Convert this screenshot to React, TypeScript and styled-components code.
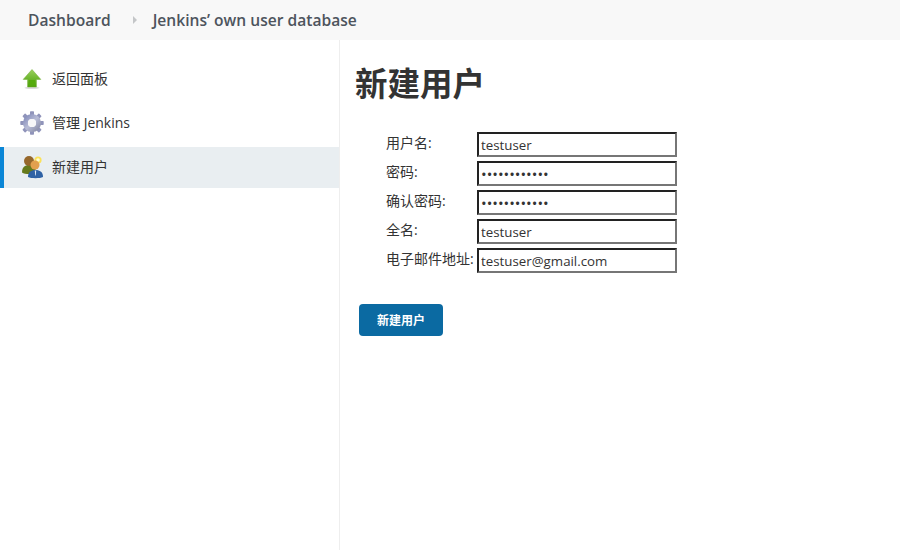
import React from "react";
import styled, { createGlobalStyle } from "styled-components";

const GlobalStyle = createGlobalStyle`
  html, body {
    margin: 0;
    padding: 0;
    background: #fff;
    font-family: "Open Sans", "Noto Sans CJK SC", sans-serif;
    color: #333;
  }
`;

const fields = [
  { label: "用户名:", type: "text", value: "testuser" },
  { label: "密码:", type: "password", value: "testuser1234" },
  { label: "确认密码:", type: "password", value: "testuser1234" },
  { label: "全名:", type: "text", value: "testuser" },
  { label: "电子邮件地址:", type: "text", value: "testuser@gmail.com" },
];

const UpIcon = () => (
  <svg width="24" height="24" viewBox="0 0 24 24">
    <defs>
      <linearGradient id="upFill" x1="0" y1="0" x2="0" y2="1">
        <stop offset="0" stopColor="#9ad05e" />
        <stop offset="0.55" stopColor="#6cb52d" />
        <stop offset="1" stopColor="#4fa00a" />
      </linearGradient>
    </defs>
    <ellipse cx="12" cy="20.8" rx="7.5" ry="1.3" fill="#dcdcdc" />
    <path d="M12 2.5 L20.8 12.4 L16.4 12.4 L16.4 20 L7.6 20 L7.6 12.4 L3.2 12.4 Z" fill="url(#upFill)" stroke="#6aa82c" strokeWidth="0.5" />
    <rect x="9" y="13" width="6" height="5.5" fill="#55ab0c" />
  </svg>
);

const GearIcon = () => {
  const teeth = [0, 45, 90, 135, 180, 225, 270, 315];
  return (
    <svg width="24" height="24" viewBox="0 0 24 24">
      <defs>
        <linearGradient id="gearFill" gradientUnits="userSpaceOnUse" x1="2" y1="2" x2="22" y2="22">
          <stop offset="0" stopColor="#6f78ae" />
          <stop offset="0.5" stopColor="#b8bcd6" />
          <stop offset="1" stopColor="#747994" />
        </linearGradient>
      </defs>
      {teeth.map(a => (
        <rect key={a} x="10" y="0.3" width="4" height="6" rx="0.7" fill="#9094ba" transform={`rotate(${a} 12 12)`} />
      ))}
      <circle cx="12" cy="12" r="6.6" fill="none" stroke="url(#gearFill)" strokeWidth="5" />
      <circle cx="12" cy="12" r="3.9" fill="#f6f6f8" />
    </svg>
  );
};

const UsersIcon = () => (
  <svg width="24" height="24" viewBox="0 0 24 24">
    <path d="M2 17.5 C2 12 5 10 9 10 C13 10 16 12 16 17.5 C13 19.5 5 19.5 2 17.5 Z" fill="#667a1c" />
    <circle cx="9" cy="6" r="5" fill="#96682c" />
    <path d="M8 22 C8 17 11 15 15.5 15 C20 15 23 17 23 22 C20 23.6 11 23.6 8 22 Z" fill="#2f62a5" />
    <path d="M14.8 15.4 L16.2 15.4 L15.8 20.5 L15.2 20.5 Z" fill="#dfe8f2" />
    <circle cx="18" cy="5" r="3.6" fill="#fbe25a" />
    <circle cx="18" cy="5" r="1.8" fill="#fffbd0" />
    <circle cx="15" cy="10" r="4.5" fill="#e2a04e" />
  </svg>
);

const App = () => {
  return (
    <>
      <GlobalStyle />
      <Page>
        <TopBar>
          <Crumb>Dashboard</Crumb>
          <CrumbArrow />
          <Crumb>Jenkins’ own user database</Crumb>
        </TopBar>
        <Body>
          <Side>
            <SideItem>
              <IconBox><UpIcon /></IconBox>
              <SideText>返回面板</SideText>
            </SideItem>
            <SideItem>
              <IconBox><GearIcon /></IconBox>
              <SideText>管理 Jenkins</SideText>
            </SideItem>
            <SideItem $active>
              <IconBox><UsersIcon /></IconBox>
              <SideText>新建用户</SideText>
            </SideItem>
          </Side>
          <Main>
            <Title>新建用户</Title>
            <Form onSubmit={e => e.preventDefault()}>
              {fields.map(f => (
                <Row key={f.label}>
                  <Label>{f.label}</Label>
                  <Input type={f.type} defaultValue={f.value} $secret={f.type === "password"} />
                </Row>
              ))}
              <Submit type="submit">新建用户</Submit>
            </Form>
          </Main>
        </Body>
      </Page>
    </>
  );
};

export default App;

const Page = styled.div`
  width: 900px;
  height: 550px;
  overflow: hidden;
  display: flex;
  flex-direction: column;
`;

const TopBar = styled.div`
  height: 40px;
  flex: none;
  background: #f8f8f8;
  display: flex;
  align-items: center;
  padding-left: 28px;
`;

const Crumb = styled.a`
  font-size: 15.6px;
  font-weight: 600;
  color: #4d545d;
`;

const CrumbArrow = styled.span`
  width: 0;
  height: 0;
  margin: 0 16px 0 22px;
  border-left: 4px solid #c4c6c8;
  border-top: 4px solid transparent;
  border-bottom: 4px solid transparent;
`;

const Body = styled.div`
  flex: 1;
  display: flex;
`;

const Side = styled.div`
  width: 340px;
  box-sizing: border-box;
  border-right: 1px solid #eee;
  padding-top: 19px;
  display: flex;
  flex-direction: column;
  gap: 3px;
`;

const SideItem = styled.a<{ $active?: boolean }>`
  height: 41px;
  box-sizing: border-box;
  display: flex;
  align-items: center;
  gap: 8px;
  padding-left: ${p => (p.$active ? "16px" : "20px")};
  padding-bottom: 2px;
  border-left: ${p => (p.$active ? "4px solid #0b86d6" : "none")};
  background: ${p => (p.$active ? "#e9eef1" : "transparent")};
  font-size: 14px;
  color: #333;
`;

const SideText = styled.span`
  margin-bottom: 2px;
`;

const IconBox = styled.span`
  width: 24px;
  height: 24px;
  display: block;
  svg {
    display: block;
  }
`;

const Main = styled.div`
  flex: 1;
  padding: 0 0 0 15px;
`;

const Title = styled.h1`
  margin: 24px 0 28px;
  font-size: 32.5px;
  line-height: 40px;
  font-weight: 700;
  color: #333;
`;

const Form = styled.form`
  display: flex;
  flex-direction: column;
  gap: 4px;
  padding-left: 4px;
`;

const Row = styled.div`
  display: flex;
  align-items: flex-start;
  height: 25px;
`;

const Label = styled.label`
  width: 118px;
  box-sizing: border-box;
  padding-left: 27px;
  font-size: 14px;
  line-height: 22px;
  color: #333;
  white-space: nowrap;
`;

const Input = styled.input<{ $secret?: boolean }>`
  width: 200px;
  height: 25px;
  box-sizing: border-box;
  margin: 0;
  padding: 1px 2px;
  border: 2px solid;
  border-color: #222 #767676 #767676 #222;
  font-family: inherit;
  font-size: ${p => (p.$secret ? "15px" : "13.3px")};
  color: #333;
  background: #fff;
  outline: none;
`;

const Submit = styled.button`
  width: 84px;
  height: 32px;
  margin-top: 27px;
  border: none;
  border-radius: 4px;
  background: #0b6aa2;
  color: #fff;
  font-family: inherit;
  font-size: 12px;
  font-weight: 700;
  padding: 0;
`;
